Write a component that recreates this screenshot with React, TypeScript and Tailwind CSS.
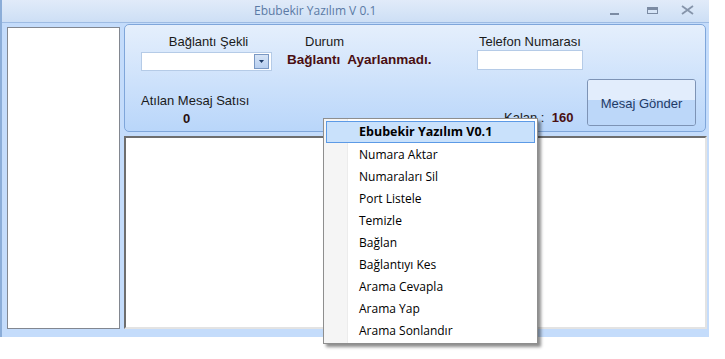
import React from 'react';

const menuItems = [
  'Numara Aktar',
  'Numaraları Sil',
  'Port Listele',
  'Temizle',
  'Bağlan',
  'Bağlantıyı Kes',
  'Arama Cevapla',
  'Arama Yap',
  'Arama Sonlandır',
];

function TitleBar() {
  return (
    <div className="relative h-[23px] flex items-center bg-gradient-to-b from-[#e1ebf9] to-[#cddff5] border-b border-[#9dbbe3]">
      <span className="ml-[252px] text-[12px] text-[#5b7aa5] font-['Open_Sans',sans-serif] leading-none">
        Ebubekir Yazılım V 0.1
      </span>
      <div className="ml-auto flex items-center h-full pr-[15px]">
        {/* minimize */}
        <div className="w-[9px] h-[2px] bg-[#7b8ba3] mt-[5px]" />
        {/* maximize */}
        <div className="ml-[28px] w-[11px] h-[7px] border border-[#7b8ba3] border-t-[3px] -mt-[2px]" />
        {/* close */}
        <svg className="ml-[23px] -mt-[3px]" width="13" height="10" viewBox="0 0 13 10">
          <path d="M1 1 L12 9 M12 1 L1 9" stroke="#8594aa" strokeWidth="1.8" />
        </svg>
      </div>
    </div>
  );
}

function ComboBox() {
  return (
    <div className="h-[19px] w-[131px] bg-white border border-[#b5cbe7] flex justify-end items-center pr-[2px]">
      <div className="w-[15px] h-[15px] bg-gradient-to-b from-[#d6e4f6] to-[#b8cff0] border border-[#7a98c3] flex items-center justify-center">
        <svg width="5" height="3" viewBox="0 0 5 3">
          <path d="M0 0 H5 L2.5 3 Z" fill="#1d3a66" />
        </svg>
      </div>
    </div>
  );
}

function ContextMenu() {
  return (
    <div className="absolute left-[323px] top-[118px] w-[215px] bg-white border border-[#8e8e8e] shadow-[3px_3px_3px_rgba(0,0,0,0.45)] py-[2px] font-['Open_Sans',sans-serif] text-[12px] text-black">
      <div className="absolute left-0 top-0 bottom-0 w-[24px] bg-[#f5f5f5] border-r border-[#ececec]" />
      <div className="relative mx-[2px] h-[22px] bg-[#c9e1fb] border border-[#5c9ae6] flex items-center pl-[32px] pt-[1px] font-bold text-[12.5px]">
        Ebubekir Yazılım V0.1
      </div>
      {menuItems.map((item) => (
        <div key={item} className="relative h-[22px] flex items-center pl-[35px] pt-[2px]">
          {item}
        </div>
      ))}
    </div>
  );
}

export default function App() {
  return (
    <div className="relative w-[725px] h-[359px] bg-white overflow-hidden font-['Liberation_Sans',Arial,sans-serif] text-[13px] text-[#1a1a1a]">
      <div className="w-[709px] h-[337px] flex flex-col bg-[#c4dcfb] border-l-2 border-[#8badd8]">
        <TitleBar />
        <div className="flex-1 flex pl-[5px] pr-[3px] pt-[1px] pb-[8px] gap-[4px]">
          {/* left list */}
          <div className="w-[113px] mt-[3px] bg-white border border-[#828790]" />

          <div className="flex-1 flex flex-col gap-[4px]">
            {/* top panel */}
            <div className="h-[108px] rounded-[5px] border border-[#7fa6da] bg-gradient-to-b from-[#e5effc] to-[#b9d6fa] flex pl-[16px] pr-[9px]">
              <div className="w-[131px] flex flex-col">
                <div className="mt-[9px] pl-[4px] text-center leading-[15px]">Bağlantı Şekli</div>
                <div className="mt-[3px]">
                  <ComboBox />
                </div>
                <div className="mt-[22px] leading-[15px] whitespace-nowrap">Atılan Mesaj Satısı</div>
                <div className="mt-[3px] pl-[42px] font-bold text-[#2a1010] leading-[15px]">0</div>
              </div>

              <div className="ml-[15px] w-[176px] flex flex-col">
                <div className="mt-[9px] pl-[18px] leading-[15px]">Durum</div>
                <div className="mt-[3px] font-bold text-[13.5px] text-[#4a0f12] leading-[15px] whitespace-nowrap">
                  Bağlantı&nbsp; Ayarlanmadı.
                </div>
              </div>

              <div className="ml-[14px] w-[106px] flex flex-col">
                <div className="mt-[9px] pl-[2px] leading-[15px] whitespace-nowrap">Telefon Numarası</div>
                <div className="mt-[1px] h-[20px] w-[106px] bg-white border border-[#b5cbe7]" />
                <div className="mt-[40px] pl-[27px] leading-[15px] whitespace-nowrap">
                  Kalan :&nbsp;&nbsp;<span className="font-bold text-[#4a0f12]">160</span>
                </div>
              </div>

              <div className="ml-auto mt-[54px] h-[47px] w-[109px] rounded-[3px] border border-[#7d93b5] overflow-hidden relative flex items-center justify-center">
                <div className="absolute inset-x-0 top-0 h-[20px] bg-[#e2edfc]" />
                <div className="absolute inset-x-0 bottom-0 top-[20px] bg-[#bcd7f9]" />
                <span className="relative mt-[2px] text-[#1e3a66]">Mesaj Gönder</span>
              </div>
            </div>

            {/* message area */}
            <div className="flex-1 mr-[-1px] bg-white border-2 border-t-[#6e6e6e] border-l-[#6e6e6e] border-r-[#e3e3e3] border-b-[#e3e3e3]" />
          </div>
        </div>
      </div>
      <ContextMenu />
    </div>
  );
}
